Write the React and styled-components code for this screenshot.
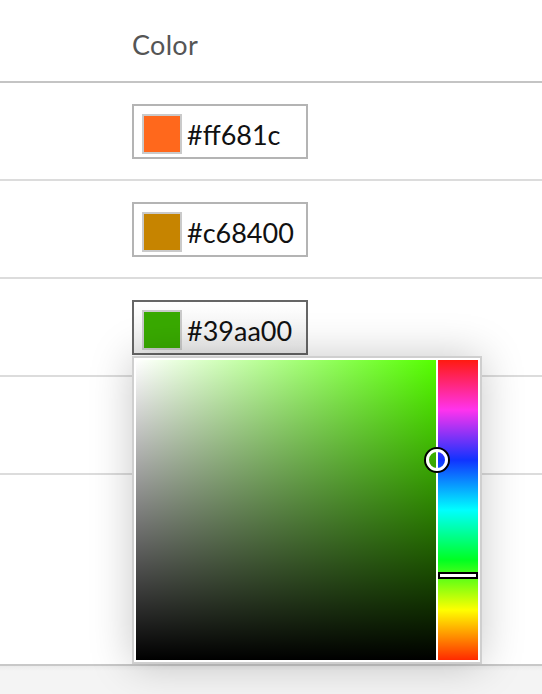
import React from "react";
import styled, { createGlobalStyle } from "styled-components";

const Global = createGlobalStyle`
  html, body { margin: 0; padding: 0; background: #fff; }
  body { font-family: Lato, "Open Sans", sans-serif; }
  * { box-sizing: border-box; }
`;

const Page = styled.div`
  height: 694px;
  display: flex;
  flex-direction: column;
  overflow: hidden;
`;

const Table = styled.div`
  flex: 1;
  display: flex;
  flex-direction: column;
`;

const HeaderRow = styled.div`
  height: 83px;
  border-bottom: 2px solid #c4c4c4;
  display: grid;
  grid-template-columns: 132px 1fr;
  align-items: center;
  padding-top: 8px;
`;

const HeaderCell = styled.div`
  font-size: 27px;
  color: #555;
  letter-spacing: 0.3px;
`;

const Row = styled.div`
  height: 98px;
  border-bottom: 2px solid #dcdcdc;
  display: grid;
  grid-template-columns: 132px 1fr;
  align-items: center;
`;

const Cell = styled.div`
  position: relative;
  display: flex;
  align-items: center;
`;

const Anchor = styled.div`
  position: relative;
`;

const ColorInput = styled.div`
  width: 176px;
  height: 55px;
  border: 2px solid ${(p) => (p.$active ? "#666" : "#b4b4b4")};
  background: ${(p) => (p.$active ? "linear-gradient(#ffffff, #ececec)" : "#fff")};
  padding: 8px 8px 3px 8px;
  display: flex;
  align-items: center;
  gap: 5px;
`;

const Swatch = styled.div`
  width: 40px;
  height: 40px;
  align-self: flex-start;
  border: 2px solid #cacaca;
  background: ${(p) => p.$color};
  flex: none;
`;

const HexText = styled.span`
  font-size: 27px;
  color: #111;
  margin-top: 2px;
  white-space: nowrap;
`;

const Popup = styled.div`
  position: absolute;
  top: calc(100% + 1px);
  left: 0;
  z-index: 10;
  background: #fff;
  border: 2px solid #cfcfcf;
  padding: 2px;
  display: flex;
  gap: 2px;
  box-shadow: 0 0 40px rgba(0, 0, 0, 0.22);
`;

const SVArea = styled.div`
  position: relative;
  width: 300px;
  height: 300px;
  background: linear-gradient(to top, #000, rgba(0, 0, 0, 0)),
    linear-gradient(to right, #fff, hsl(${(p) => p.$hue}, 100%, 50%));
  z-index: 2;
`;

const SVCursor = styled.div`
  position: absolute;
  width: 22px;
  height: 22px;
  margin: -11px 0 0 -11px;
  border-radius: 50%;
  border: 3px solid #fff;
  box-shadow: 0 0 0 2px #000;
`;

const HueBar = styled.div`
  position: relative;
  width: 40px;
  height: 300px;
  background: linear-gradient(
    to bottom,
    #ff1a10 0%,
    #ff33ee 16.67%,
    #1133ff 33.33%,
    #00ffff 50%,
    #00ff22 66.67%,
    #ffff00 83.33%,
    #ff2a00 100%
  );
`;

const HueMarker = styled.div`
  position: absolute;
  left: 0;
  right: 0;
  height: 7px;
  margin-top: -4px;
  background: #fff;
  border: 2px solid #000;
`;

const Footer = styled.div`
  height: 30px;
  border-top: 2px solid #c8c8c8;
  background: linear-gradient(#ebebeb, #f4f4f4 5px);
`;

const colors = [
  { hex: "#ff681c" },
  { hex: "#c68400" },
  { hex: "#39aa00", active: true, hue: 100, s: 1, v: 170 / 255 },
];

export default function App() {
  return (
    <Page>
      <Global />
      <Table>
        <HeaderRow>
          <div />
          <HeaderCell>Color</HeaderCell>
        </HeaderRow>
        {colors.map((c) => (
          <Row key={c.hex}>
            <div />
            <Cell>
              <Anchor>
                <ColorInput $active={c.active}>
                  <Swatch $color={c.hex} />
                  <HexText>{c.hex}</HexText>
                </ColorInput>
                {c.active && (
                  <Popup>
                    <SVArea $hue={c.hue}>
                      <SVCursor
                        style={{ left: `${c.s * 300 + 1}px`, top: `${(1 - c.v) * 300}px` }}
                      />
                    </SVArea>
                    <HueBar>
                      <HueMarker style={{ top: `${(1 - c.hue / 360) * 300}px` }} />
                    </HueBar>
                  </Popup>
                )}
              </Anchor>
            </Cell>
          </Row>
        ))}
        <Row>
          <div />
          <Cell />
        </Row>
      </Table>
      <Footer />
    </Page>
  );
}
